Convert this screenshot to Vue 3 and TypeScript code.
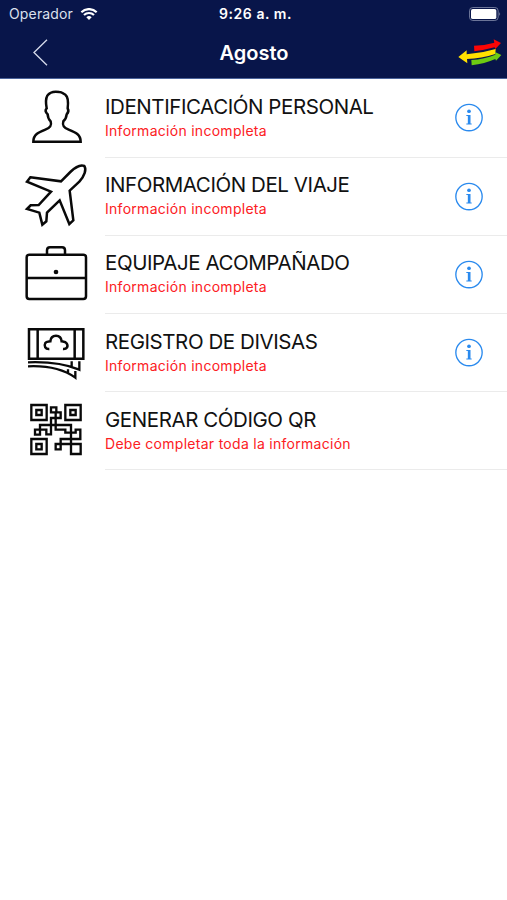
<script setup lang="ts">
type IconName = 'person' | 'plane' | 'case' | 'money' | 'qr'

interface MenuItem {
  icon: IconName
  title: string
  status: string
  info: boolean
}

const items: MenuItem[] = [
  { icon: 'person', title: 'IDENTIFICACIÓN PERSONAL', status: 'Información incompleta', info: true },
  { icon: 'plane', title: 'INFORMACIÓN DEL VIAJE', status: 'Información incompleta', info: true },
  { icon: 'case', title: 'EQUIPAJE ACOMPAÑADO', status: 'Información incompleta', info: true },
  { icon: 'money', title: 'REGISTRO DE DIVISAS', status: 'Información incompleta', info: true },
  { icon: 'qr', title: 'GENERAR CÓDIGO QR', status: 'Debe completar toda la información', info: false },
]
</script>

<template>
  <div class="screen">
    <header class="header">
      <div class="status-bar">
        <div class="carrier">
          <span>Operador</span>
          <svg class="wifi" viewBox="0 0 51 36">
            <path d="M25.500 36 L17.500 28 A11.500 11.500 0 0 1 33.500 28 Z" fill="#fff" />
            <path d="M10.500 21 A21.500 21.500 0 0 1 40.500 21" fill="none" stroke="#fff" stroke-width="6.500" />
            <path d="M2.500 12.500 A33 33 0 0 1 48.500 12.500" fill="none" stroke="#fff" stroke-width="6.500" />
          </svg>
        </div>
        <div class="time">9:26 a. m.</div>
        <svg class="battery" viewBox="0 0 96 42">
          <rect x="1.500" y="1.500" width="86" height="39" rx="10" fill="none" stroke="#7f88a8" stroke-width="2.500" />
          <rect x="6" y="6" width="76" height="30" rx="5.500" fill="#fff" />
          <path d="M91 15 Q96 21 91 27 Z" fill="#8990ae" />
        </svg>
      </div>
      <div class="nav-bar">
        <button class="back" aria-label="Atrás">
          <svg viewBox="0 0 45 80"><path d="M42 2 L3 40 L42 78" fill="none" stroke="#d5daea" stroke-width="4" /></svg>
        </button>
        <h1>Agosto</h1>
        <svg class="logo" viewBox="0 0 132 84">
          <path d="M48 20 Q78 20 109 11 L107 1 L129 12 L112 30 L110 25 Q80 33 49 37 Z" fill="#fb0505" />
          <path d="M1 54 L26 34 L26 46 Q70 43 113 30 L112 45 Q70 59 27 60 L28 73 Z" fill="#ffe000" />
          <path d="M40 63 Q80 60 112 47 L111 39 L130 48 L114 65 L112 60 Q80 74 41 79 Z" fill="#6ecb12" />
        </svg>
      </div>
    </header>
    <ul class="menu">
      <li v-for="item in items" :key="item.icon" class="row">
        <svg class="icon" viewBox="0 0 270 234">
          <path
            v-if="item.icon === 'person'"
            d="M55 185 C55 164 70 157 91 149 C109 142 110 134 107 124 C102 119 98 111 98 103 C91 96 91 89 95 85 C92 69 92 56 97 47 C105 35 121 34 133 36 C142 36 145 42 151 44 C160 51 160 69 158 85 C161 90 161 97 155 103 C154 112 151 119 145 124 C142 134 143 142 161 149 C182 157 197 164 197 185 Z"
            stroke-width="7.500"
          />
          <path
            v-else-if="item.icon === 'plane'"
            d="M46 58 L138 70 L166 42 C181 27 198 20 208 24 C215 34 209 53 193 71 L164 98 L175 187 L163 198 L134 127 L96 164 L94 190 L82 200 L73 164 L36 153 L47 142 L71 141 L108 101 L36 71 Z"
            stroke-width="7.500"
          />
          <g v-else-if="item.icon === 'case'" stroke-width="7.500">
            <rect x="35" y="56" width="178" height="133" rx="8" />
            <path d="M35 126 H213 M96 56 V43 Q96 34 105 34 H141 Q150 34 150 43 V56" />
            <circle cx="123" cy="108" r="7" fill="#090909" stroke="none" />
          </g>
          <g v-else-if="item.icon === 'money'" stroke-width="7.500">
            <path d="M42 46 H205 V134 H42 Z M68 46 V134 M179 46 V134" />
            <path d="M103 105 C91 106 86 96 91 87 C94 82 100 83 106 82 C107 70 114 65 123 65 C132 65 139 71 140 82 C146 83 151 82 155 88 C161 98 155 106 144 105" />
            <path d="M39 145 C90 143 144 147 193 167 V142 M170 142 V157 M39 157 C83 155 140 162 181 191 V171 M159 166 V178" stroke-width="7" />
          </g>
          <g v-else stroke-width="7">
            <path d="M49 39 H95 V84 H49 Z M64 54 H80 V69 H64 Z M151 39 H197 V84 H151 Z M166 54 H182 V69 H166 Z M49 141 H95 V186 H49 Z M64 156 H80 V172 H64 Z" />
            <path d="M108 46 H124 V61 H108 Z M122 61 H137 V78 H108 V99 M122 61 V113 H151 V122 H182 V113 H196 V141 H137 V156 M75 113 V99 H168 V186 H197 V156 H122 V172 H137 V156 M60 113 H75 V128 H60 Z M75 113 H94 V127 H108 V92 M168 141 V156" />
          </g>
        </svg>
        <div class="texts">
          <div class="title">{{ item.title }}</div>
          <div class="detail">{{ item.status }}</div>
        </div>
        <svg v-if="item.info" class="info" viewBox="0 0 84 84">
          <circle cx="42" cy="42" r="39.500" fill="none" stroke="#2a8aee" stroke-width="4" />
          <circle cx="42" cy="23" r="5.500" fill="#2a8aee" />
          <path d="M34 34 H46.500 V60 H50 V63 H34 V60 H38.500 V37 H34 Z" fill="#2a8aee" />
        </svg>
      </li>
    </ul>
  </div>
</template>

<style>
body {
  background: #fff;
}
</style>

<style scoped>
.screen {
  width: 507px;
  height: 900px;
  overflow: hidden;
  background: #fff;
  font-family: Inter, 'Liberation Sans', sans-serif;
}
.header {
  box-sizing: border-box;
  height: 79px;
  background: #08154a;
  border-bottom: 1px solid #4b639a;
  color: #fff;
}
.status-bar {
  display: grid;
  grid-template-columns: 1fr auto 1fr;
  align-items: center;
  height: 27px;
  padding: 0 6px 0 9px;
}
.carrier {
  display: flex;
  align-items: center;
  gap: 7px;
  font-size: 14px;
  letter-spacing: 0.15px;
  color: #dce0ed;
}
.wifi {
  width: 18px;
  height: 12px;
}
.time {
  padding-left: 1px;
  font-size: 14px;
  font-weight: 600;
  letter-spacing: 0.55px;
}
.battery {
  width: 32px;
  height: 14px;
  justify-self: end;
}
.nav-bar {
  display: grid;
  grid-template-columns: 1fr auto 1fr;
  align-items: center;
  height: 51px;
  padding: 0 5px 0 6px;
}
.back {
  display: flex;
  padding: 0 0 0 27px;
  border: 0;
  background: none;
}
.back svg {
  width: 15px;
  height: 27px;
}
h1 {
  margin: 0;
  font-size: 20px;
  font-weight: 600;
}
.logo {
  width: 44px;
  height: 28px;
  justify-self: end;
}
.menu {
  margin: 0;
  padding: 0.4px 0 0;
  list-style: none;
}
.row {
  display: flex;
  height: 78.2px;
  padding-left: 15px;
}
.icon {
  flex: none;
  width: 90px;
  height: 78px;
  margin-top: 0.2px;
  fill: none;
  stroke: #090909;
}
.texts {
  flex: 1;
  box-sizing: border-box;
  padding-top: 14.6px;
  border-bottom: 1px solid #ebebeb;
  white-space: nowrap;
}
.title {
  font-size: 20.5px;
  line-height: 25px;
  letter-spacing: -0.43px;
  color: #111;
}
.detail {
  font-size: 14px;
  line-height: 18px;
  letter-spacing: 0.28px;
  margin-top: 3px;
  color: #fc2023;
}
.info {
  box-sizing: border-box;
  width: 52px;
  height: 78.2px;
  padding: 0 24px 0 0;
  border-bottom: 1px solid #ebebeb;
}
</style>
